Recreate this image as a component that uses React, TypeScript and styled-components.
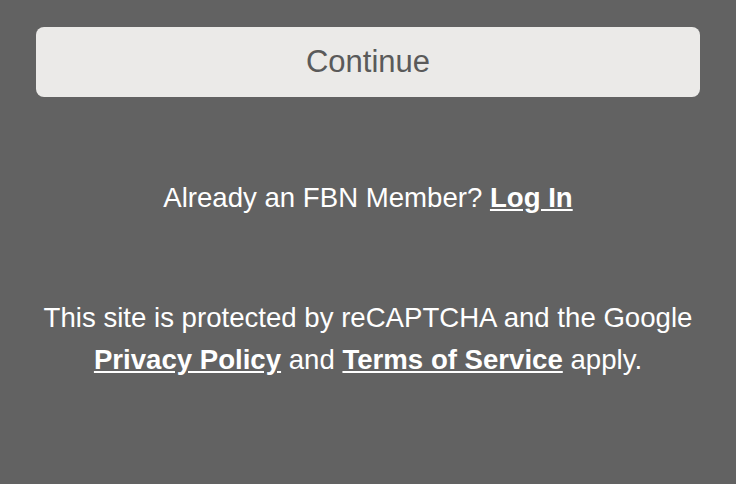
import styled, { createGlobalStyle } from "styled-components";

const GlobalStyle = createGlobalStyle`
  body {
    margin: 0;
    background: #626262;
    font-family: "Liberation Sans", Arial, sans-serif;
  }
`;

const Page = styled.div`
  width: 736px;
  height: 484px;
  box-sizing: border-box;
  padding: 27px 36px 0;
  display: flex;
  flex-direction: column;
  align-items: center;
`;

const ContinueButton = styled.button`
  width: 100%;
  height: 70px;
  border: none;
  border-radius: 8px;
  background: #ebeae8;
  color: #5a5a5a;
  font-family: "Liberation Sans", Arial, sans-serif;
  font-size: 31px;
  cursor: pointer;
`;

const Text = styled.p<{ $top: number }>`
  margin: ${({ $top }) => $top}px 0 0;
  color: #ffffff;
  font-size: 27.6px;
  line-height: 42px;
  text-align: center;
  white-space: nowrap;
`;

const Link = styled.a`
  color: #ffffff;
  font-weight: bold;
  text-decoration: underline;
`;

export default function App() {
  return (
    <>
      <GlobalStyle />
      <Page>
        <ContinueButton>Continue</ContinueButton>
        <Text $top={80}>
          Already an FBN Member? <Link href="#">Log In</Link>
        </Text>
        <Text $top={78}>
          This site is protected by reCAPTCHA and the Google
          <br />
          <Link href="#">Privacy Policy</Link> and <Link href="#">Terms of Service</Link> apply.
        </Text>
      </Page>
    </>
  );
}
